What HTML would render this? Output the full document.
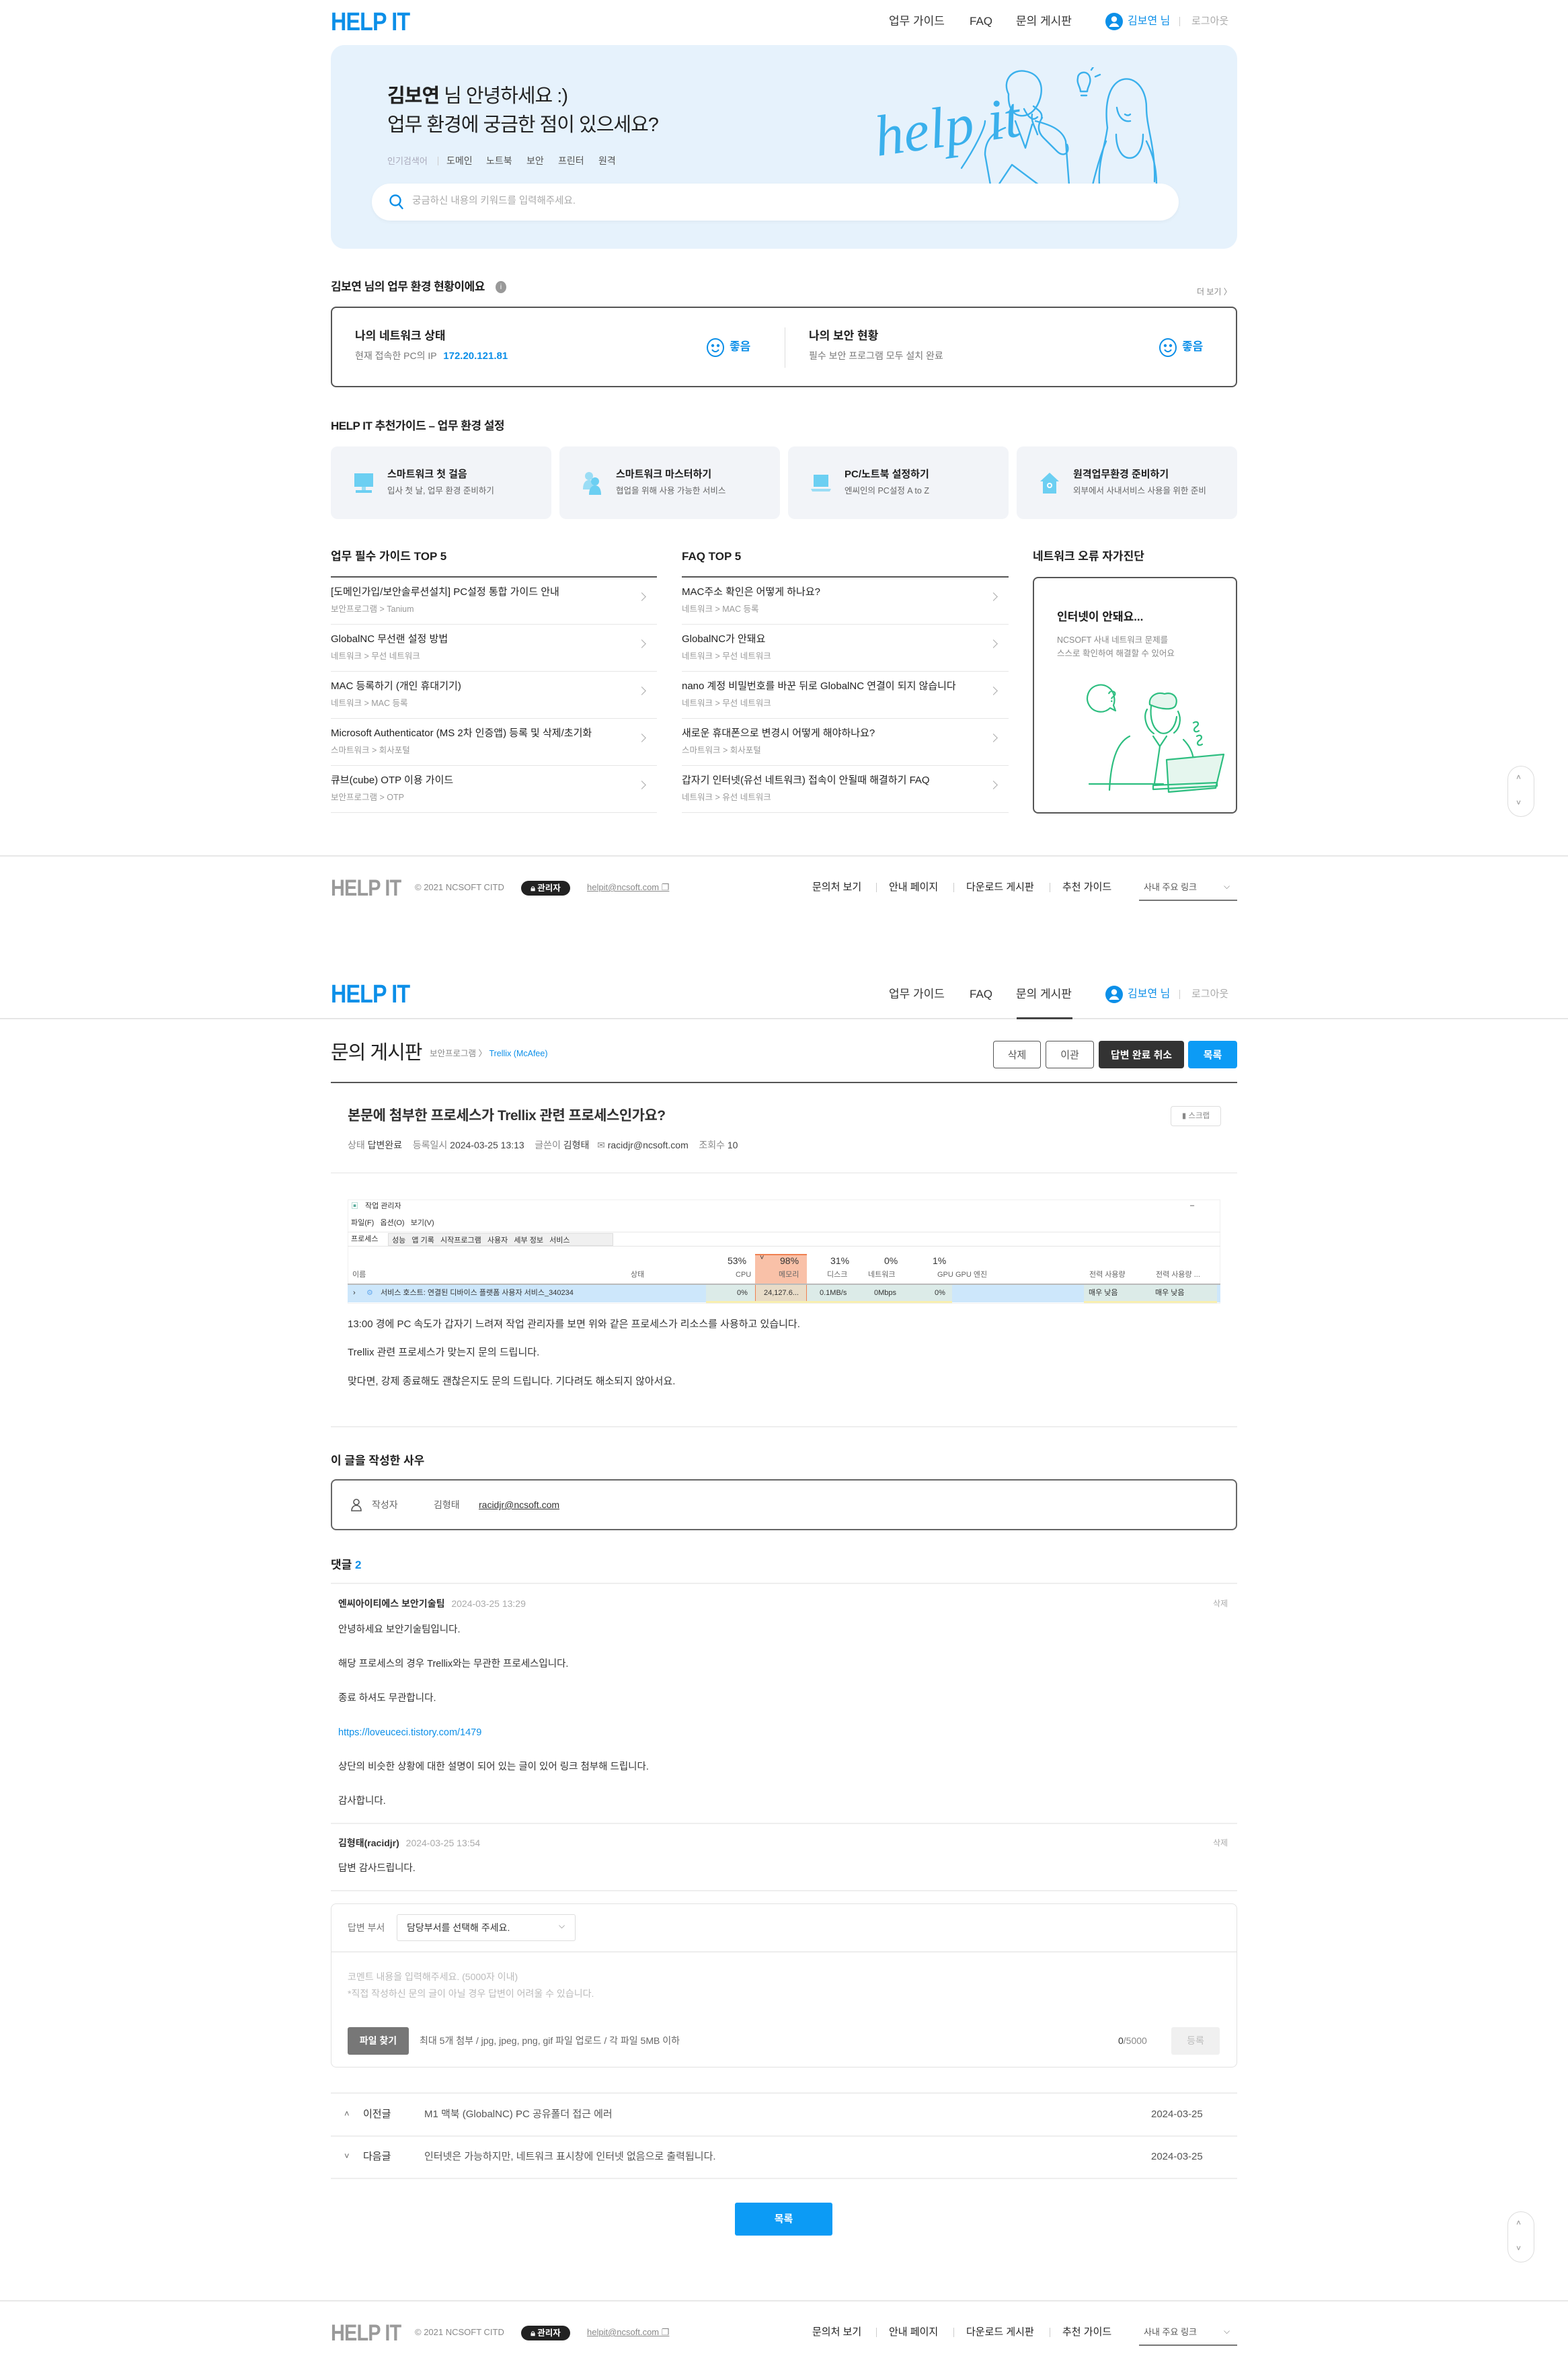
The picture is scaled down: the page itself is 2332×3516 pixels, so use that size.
<!DOCTYPE html>
<html><head><meta charset="utf-8">
<style>
*{margin:0;padding:0;box-sizing:border-box}
body{width:2332px;height:3516px;background:#fff;position:relative;overflow:hidden;font-family:"Liberation Sans","Noto Sans CJK KR",sans-serif;color:#222}
.a{position:absolute;white-space:nowrap;line-height:1}
.logo{position:absolute;font-family:"Liberation Sans Narrow","Liberation Sans",sans-serif;font-weight:700;font-size:38px;color:#0C8FE8;letter-spacing:-1px;line-height:1;transform:scaleX(.85);transform-origin:left}
.glogo{color:#9a9a9a;font-size:34px}
.nav{font-size:17px;color:#333}
.hl{position:absolute;height:1px;background:#e4e4e4}
.g{color:#888}
.box{position:absolute;border:2px solid #555;border-radius:8px}
.card{position:absolute;top:664px;width:328px;height:108px;background:#F2F4F8;border-radius:10px}
.card .t1{position:absolute;left:84px;top:34px;font-size:15px;font-weight:700;line-height:1}
.card .t2{position:absolute;left:84px;top:60px;font-size:12.5px;color:#666;line-height:1}
.li{position:absolute;height:70px}
.li .t1{position:absolute;left:0;top:14px;font-size:15px;color:#222;line-height:1;white-space:nowrap}
.li .t2{position:absolute;left:0;top:41px;font-size:12.5px;color:#999;line-height:1;white-space:nowrap}
.li .ch{position:absolute;right:18px;top:24px;width:9px;height:9px;border-top:1.5px solid #aaa;border-right:1.5px solid #aaa;transform:rotate(45deg)}
.li:after{content:"";position:absolute;left:0;right:0;bottom:0;height:1px;background:#e6e6e6}
.btn{position:absolute;top:1548px;height:41px;border-radius:4px;font-size:15px;display:flex;align-items:center;justify-content:center}
.tm{position:absolute;font-size:11px;line-height:1;white-space:nowrap;color:#333}
.cm{position:absolute;left:503px;font-size:14.5px;line-height:1;white-space:nowrap;color:#333}
.fl{position:absolute;font-size:15px;top:1312px;color:#222;line-height:1}
.sep{position:absolute;width:1px;height:14px;background:#ccc}
</style></head><body>

<!-- ===== HEADER 1 ===== -->
<div class="logo" style="left:492px;top:14px">HELP IT</div>
<div class="a nav" style="left:1322px;top:23px">업무 가이드</div>
<div class="a nav" style="left:1442px;top:23px">FAQ</div>
<div class="a nav" style="left:1511px;top:23px">문의 게시판</div>
<svg class="a" style="left:1643px;top:18px" width="28" height="28" viewBox="0 0 28 28"><circle cx="14" cy="14" r="13" fill="#0C8FE8"/><circle cx="14" cy="10.5" r="4.2" fill="#fff"/><path d="M6.5 22c1.5-4 4.3-5.5 7.5-5.5s6 1.5 7.5 5.5" fill="#fff"/></svg>
<div class="a" style="left:1677px;top:24px;font-size:16px;color:#0C8FE8">김보연 님</div>
<div class="sep" style="left:1754px;top:25px"></div>
<div class="a" style="left:1772px;top:24px;font-size:15px;color:#aaa">로그아웃</div>

<!-- HERO -->
<div class="a" style="left:492px;top:67px;width:1348px;height:303px;background:#E6F2FC;border-radius:20px"></div>
<div class="a" style="left:576px;top:129px;font-size:29px;color:#222;letter-spacing:-1px"><b>김보연</b> 님 안녕하세요 :)</div>
<div class="a" style="left:576px;top:172px;font-size:29px;color:#222;letter-spacing:-1px">업무 환경에 궁금한 점이 있으세요?</div>
<div class="a" style="left:576px;top:233px;font-size:13px;color:#aab">인기검색어</div>
<div class="sep" style="left:651px;top:233px;height:13px"></div>
<div class="a" style="left:664px;top:232px;font-size:14px;color:#555">도메인</div>
<div class="a" style="left:723px;top:232px;font-size:14px;color:#555">노트북</div>
<div class="a" style="left:783px;top:232px;font-size:14px;color:#555">보안</div>
<div class="a" style="left:830px;top:232px;font-size:14px;color:#555">프린터</div>
<div class="a" style="left:890px;top:232px;font-size:14px;color:#555">원격</div>
<svg class="a" style="left:1305px;top:100px" width="430" height="180" viewBox="0 0 430 180" fill="none" stroke="#3AB0EC" stroke-width="2.4" stroke-linecap="round" stroke-linejoin="round">
<text x="0" y="132" font-family="Liberation Serif" font-style="italic" font-size="86" fill="#3AB0EC" stroke="none" transform="rotate(-8 0 132)">help it</text>
<path d="M125 150c20-30 35-60 35-70"/>
<path d="M195 40c-10-20 5-38 25-34 18 3 28 18 22 40-4 14-14 28-30 26-12-2-18-14-17-32"/>
<path d="M218 62c5 10 12 20 20 12"/><path d="M232 58c8 6 14 10 12 18"/>
<path d="M190 90c-20 8-30 20-30 40l8 45"/><path d="M235 80c20 5 40 12 45 30l5 65"/>
<path d="M205 80l15 40 10-35"/><path d="M238 100c-4-12-10-20-8-30"/>
<path d="M245 75c-8 12-6 22 2 30l20 20c10 10 20 2 15-10"/>
<path d="M180 175l20-30 40 30"/>
<path d="M298 16c0-10 16-12 18 0 2 8-4 14-4 20h-10c0-6-6-12-4-20z"/><path d="M303 42h8"/><path d="M318 4l4-6"/><path d="M324 14l7-3"/>
<path d="M360 20c-18 10-22 40-18 70-4 30-14 50-12 85"/><path d="M360 20c20-10 40 10 40 40 0 30 14 60 12 110"/>
<path d="M356 60c2 14 10 22 20 20"/><path d="M368 70c3 2 6 2 8 0"/>
<path d="M355 100c0 20 8 35 20 35s20-14 20-35"/>
<path d="M340 110c-8 20-14 40-20 65"/><path d="M400 110c10 20 15 40 15 65"/>
</svg>
<div class="a" style="left:553px;top:273px;width:1200px;height:55px;background:#fff;border-radius:28px;box-shadow:0 2px 6px rgba(0,0,0,.04)"></div>
<svg class="a" style="left:578px;top:288px" width="24" height="26" viewBox="0 0 24 26" fill="none" stroke="#0C8FE8" stroke-width="2.4"><circle cx="10" cy="10" r="7.5"/><path d="M15.5 16l5 6" stroke-linecap="round"/></svg>
<div class="a" style="left:613px;top:292px;font-size:14.5px;color:#aaa">궁금하신 내용의 키워드를 입력해주세요.</div>

<!-- STATUS -->
<div class="a" style="left:492px;top:418px;font-size:17px;font-weight:700;letter-spacing:-.5px">김보연 님의 업무 환경 현황이에요</div>
<div class="a" style="left:737px;top:418px;width:16px;height:18px;border-radius:50%;background:#999;color:#fff;font-size:11px;text-align:center;line-height:18px">i</div>
<div class="a" style="left:1780px;top:428px;font-size:12px;color:#888">더 보기 〉</div>
<div class="box" style="left:492px;top:456px;width:1348px;height:120px"></div>
<div class="a" style="left:528px;top:491px;font-size:17px;font-weight:700">나의 네트워크 상태</div>
<div class="a" style="left:528px;top:522px;font-size:14px;color:#777">현재 접속한 PC의 IP <b style="color:#0C8FE8;font-size:15px;margin-left:6px">172.20.121.81</b></div>
<svg class="a" style="left:1050px;top:502px" width="28" height="30" viewBox="0 0 28 30" fill="none" stroke="#0C8FE8" stroke-width="2"><ellipse cx="14" cy="15" rx="12" ry="13"/><circle cx="10" cy="12" r="1.2" fill="#0C8FE8"/><circle cx="18" cy="12" r="1.2" fill="#0C8FE8"/><path d="M9 18c3 4 7 4 10 0"/></svg>
<div class="a" style="left:1085px;top:507px;font-size:17px;color:#0C8FE8;font-weight:700">좋음</div>
<div class="a" style="left:1167px;top:487px;width:1px;height:60px;background:#ddd"></div>
<div class="a" style="left:1203px;top:491px;font-size:17px;font-weight:700">나의 보안 현황</div>
<div class="a" style="left:1203px;top:522px;font-size:14px;color:#777">필수 보안 프로그램 모두 설치 완료</div>
<svg class="a" style="left:1723px;top:502px" width="28" height="30" viewBox="0 0 28 30" fill="none" stroke="#0C8FE8" stroke-width="2"><ellipse cx="14" cy="15" rx="12" ry="13"/><circle cx="10" cy="12" r="1.2" fill="#0C8FE8"/><circle cx="18" cy="12" r="1.2" fill="#0C8FE8"/><path d="M9 18c3 4 7 4 10 0"/></svg>
<div class="a" style="left:1758px;top:507px;font-size:17px;color:#0C8FE8;font-weight:700">좋음</div>

<!-- GUIDE CARDS -->
<div class="a" style="left:492px;top:625px;font-size:17px;font-weight:700;letter-spacing:-.5px">HELP IT 추천가이드 – 업무 환경 설정</div>
<div class="card" style="left:492px"><svg style="position:absolute;left:32px;top:38px" width="34" height="34" viewBox="0 0 34 34"><rect x="3" y="2" width="28" height="20" fill="#6CCFF2"/><rect x="14" y="22" width="6" height="5" fill="#9BDDF5"/><rect x="5" y="27" width="24" height="4" fill="#6CCFF2"/></svg><div class="t1">스마트워크 첫 걸음</div><div class="t2">입사 첫 날, 업무 환경 준비하기</div></div>
<div class="card" style="left:832px"><svg style="position:absolute;left:32px;top:36px" width="34" height="38" viewBox="0 0 34 38"><circle cx="12" cy="8" r="6" fill="#9BDDF5"/><path d="M3 28c0-10 4-14 9-14s9 4 9 14z" fill="#9BDDF5"/><circle cx="21" cy="16" r="6" fill="#6CCFF2"/><path d="M12 36c0-10 4-14 9-14s9 4 9 14z" fill="#6CCFF2"/></svg><div class="t1">스마트워크 마스터하기</div><div class="t2">협업을 위해 사용 가능한 서비스</div></div>
<div class="card" style="left:1172px"><svg style="position:absolute;left:32px;top:38px" width="34" height="34" viewBox="0 0 34 34"><rect x="6" y="4" width="22" height="18" fill="#6CCFF2"/><path d="M2 25h30l-2 4H4z" fill="#9BDDF5"/></svg><div class="t1">PC/노트북 설정하기</div><div class="t2">엔씨인의 PC설정 A to Z</div></div>
<div class="card" style="left:1512px"><svg style="position:absolute;left:32px;top:36px" width="34" height="38" viewBox="0 0 34 38"><path d="M17 3L3 16h4v18h20V16h4z" fill="#6CCFF2"/><circle cx="17" cy="22" r="4" fill="#fff"/><circle cx="17" cy="22" r="2" fill="#6CCFF2"/></svg><div class="t1">원격업무환경 준비하기</div><div class="t2">외부에서 사내서비스 사용을 위한 준비</div></div>

<!-- TOP5 -->
<div class="a" style="left:492px;top:819px;font-size:17px;font-weight:700">업무 필수 가이드 TOP 5</div>
<div class="a" style="left:1014px;top:819px;font-size:17px;font-weight:700">FAQ TOP 5</div>
<div class="a" style="left:1536px;top:819px;font-size:17px;font-weight:700">네트워크 오류 자가진단</div>
<div class="a" style="left:492px;top:857px;width:485px;height:2px;background:#555"></div>
<div class="a" style="left:1014px;top:857px;width:486px;height:2px;background:#555"></div>
<div class="li" style="left:492px;top:859px;width:485px"><div class="t1">[도메인가입/보안솔루션설치] PC설정 통합 가이드 안내</div><div class="t2">보안프로그램 &gt; Tanium</div><div class="ch"></div></div>
<div class="li" style="left:492px;top:929px;width:485px"><div class="t1">GlobalNC 무선랜 설정 방법</div><div class="t2">네트워크 &gt; 무선 네트워크</div><div class="ch"></div></div>
<div class="li" style="left:492px;top:999px;width:485px"><div class="t1">MAC 등록하기 (개인 휴대기기)</div><div class="t2">네트워크 &gt; MAC 등록</div><div class="ch"></div></div>
<div class="li" style="left:492px;top:1069px;width:485px"><div class="t1">Microsoft Authenticator (MS 2차 인증앱) 등록 및 삭제/초기화</div><div class="t2">스마트워크 &gt; 회사포털</div><div class="ch"></div></div>
<div class="li" style="left:492px;top:1139px;width:485px"><div class="t1">큐브(cube) OTP 이용 가이드</div><div class="t2">보안프로그램 &gt; OTP</div><div class="ch"></div></div>
<div class="li" style="left:1014px;top:859px;width:486px"><div class="t1">MAC주소 확인은 어떻게 하나요?</div><div class="t2">네트워크 &gt; MAC 등록</div><div class="ch"></div></div>
<div class="li" style="left:1014px;top:929px;width:486px"><div class="t1">GlobalNC가 안돼요</div><div class="t2">네트워크 &gt; 무선 네트워크</div><div class="ch"></div></div>
<div class="li" style="left:1014px;top:999px;width:486px"><div class="t1">nano 계정 비밀번호를 바꾼 뒤로 GlobalNC 연결이 되지 않습니다</div><div class="t2">네트워크 &gt; 무선 네트워크</div><div class="ch"></div></div>
<div class="li" style="left:1014px;top:1069px;width:486px"><div class="t1">새로운 휴대폰으로 변경시 어떻게 해야하나요?</div><div class="t2">스마트워크 &gt; 회사포털</div><div class="ch"></div></div>
<div class="li" style="left:1014px;top:1139px;width:486px"><div class="t1">갑자기 인터넷(유선 네트워크) 접속이 안될때 해결하기 FAQ</div><div class="t2">네트워크 &gt; 유선 네트워크</div><div class="ch"></div></div>
<div class="box" style="left:1536px;top:858px;width:304px;height:352px"></div>
<div class="a" style="left:1572px;top:909px;font-size:17px;font-weight:700">인터넷이 안돼요...</div>
<div class="a" style="left:1572px;top:946px;font-size:12.5px;color:#888">NCSOFT 사내 네트워크 문제를</div>
<div class="a" style="left:1572px;top:966px;font-size:12.5px;color:#888">스스로 확인하여 해결할 수 있어요</div>
<svg class="a" style="left:1610px;top:1000px" width="225" height="185" viewBox="0 0 225 185" fill="none" stroke="#2DBE80" stroke-width="2.2" stroke-linecap="round" stroke-linejoin="round">
<path d="M47 37a20 20 0 1 0-6 16l8 4-3-8a20 20 0 0 0 1-12"/><text x="37" y="44" font-size="24" fill="#2DBE80" stroke="none" font-family="Liberation Sans">?</text>
<path d="M100 48c-2-12 10-20 22-16 12-4 22 6 16 18-4 6-20 6-38-2z" fill="#E5F6EE"/>
<path d="M102 50c-2 18 2 34 14 40 12 4 22-8 24-24"/>
<path d="M96 55c-6 10-2 28 10 36"/><path d="M142 58c6 12 2 26-6 32"/>
<path d="M70 95c-20 10-28 40-30 80"/><path d="M105 95l10 15 10-15"/><path d="M115 110l-8 55"/>
<path d="M150 100c10 10 14 20 15 30"/>
<path d="M10 166h110"/>
<path d="M165 75c6-4 10 2 4 6-6 4-2 10 4 6"/><path d="M170 95c6-4 10 2 4 6-6 4-2 10 4 6"/>
<path d="M125 130l85-8-12 50-70 6z" fill="#E5F6EE"/><path d="M105 168l95-4v5l-95 5z"/>
</svg>

<!-- FOOTER 1 -->
<div class="hl" style="left:0;top:1272px;width:2332px;height:2px;background:#e8e8e8"></div>
<div class="logo glogo" style="left:492px;top:1304px">HELP IT</div>
<div class="a" style="left:617px;top:1313px;font-size:13px;color:#888">© 2021 NCSOFT CITD</div>
<div class="a" style="left:775px;top:1310px;width:73px;height:22px;border-radius:11px;background:#222;color:#fff;font-size:12.5px;font-weight:700;text-align:center;line-height:22px">🔒︎ 관리자</div>
<div class="a" style="left:873px;top:1313px;font-size:13px;color:#888;text-decoration:underline">helpit@ncsoft.com ❐</div>
<div class="fl" style="left:1208px">문의처 보기</div><div class="sep" style="left:1303px;top:1313px"></div>
<div class="fl" style="left:1322px">안내 페이지</div><div class="sep" style="left:1418px;top:1313px"></div>
<div class="fl" style="left:1437px">다운로드 게시판</div><div class="sep" style="left:1561px;top:1313px"></div>
<div class="fl" style="left:1580px">추천 가이드</div>
<div class="a" style="left:1701px;top:1313px;font-size:13px;color:#555">사내 주요 링크</div>
<div class="a" style="left:1820px;top:1312px;font-size:12px;color:#777">⌵</div>
<div class="a" style="left:1694px;top:1338px;width:146px;height:2px;background:#777"></div>

<!-- ===== HEADER 2 ===== -->
<div class="logo" style="left:492px;top:1460px">HELP IT</div>
<div class="a nav" style="left:1322px;top:1470px">업무 가이드</div>
<div class="a nav" style="left:1442px;top:1470px">FAQ</div>
<div class="a nav" style="left:1511px;top:1470px">문의 게시판</div>
<svg class="a" style="left:1643px;top:1465px" width="28" height="28" viewBox="0 0 28 28"><circle cx="14" cy="14" r="13" fill="#0C8FE8"/><circle cx="14" cy="10.5" r="4.2" fill="#fff"/><path d="M6.5 22c1.5-4 4.3-5.5 7.5-5.5s6 1.5 7.5 5.5" fill="#fff"/></svg>
<div class="a" style="left:1677px;top:1471px;font-size:16px;color:#0C8FE8">김보연 님</div>
<div class="sep" style="left:1754px;top:1472px"></div>
<div class="a" style="left:1772px;top:1471px;font-size:15px;color:#aaa">로그아웃</div>
<div class="hl" style="left:0;top:1514px;width:2332px;height:2px;background:#e6e6e6"></div>
<div class="a" style="left:1512px;top:1513px;width:83px;height:3px;background:#444"></div>

<div class="a" style="left:492px;top:1552px;font-size:29px;letter-spacing:-1px">문의 게시판</div>
<div class="a" style="left:639px;top:1561px;font-size:12.5px;color:#888">보안프로그램 〉 <span style="color:#0C8FE8">Trellix (McAfee)</span></div>
<div class="btn" style="left:1477px;width:71px;border:1.5px solid #555;color:#555">삭제</div>
<div class="btn" style="left:1555px;width:72px;border:1.5px solid #555;color:#555">이관</div>
<div class="btn" style="left:1634px;width:127px;background:#333;color:#fff;font-weight:700">답변 완료 취소</div>
<div class="btn" style="left:1767px;width:73px;background:#0C9BF5;color:#fff;font-weight:700">목록</div>
<div class="a" style="left:492px;top:1609px;width:1348px;height:2px;background:#555"></div>

<div class="a" style="left:517px;top:1649px;font-size:21px;font-weight:700;letter-spacing:-.5px;color:#333">본문에 첨부한 프로세스가 Trellix 관련 프로세스인가요?</div>
<div class="a" style="left:1741px;top:1645px;width:75px;height:30px;border:1px solid #ddd;border-radius:4px;font-size:11.5px;color:#888;text-align:center;line-height:28px">▮ 스크랩</div>
<div class="a" style="left:517px;top:1696px;font-size:14px;color:#888">상태 <span style="color:#444">답변완료</span>&nbsp;&nbsp;&nbsp;&nbsp;등록일시 <span style="color:#444">2024-03-25 13:13</span>&nbsp;&nbsp;&nbsp;&nbsp;글쓴이 <span style="color:#444">김형태</span>&nbsp;&nbsp;&nbsp;✉ <span style="color:#444">racidjr@ncsoft.com</span>&nbsp;&nbsp;&nbsp;&nbsp;조회수 <span style="color:#444">10</span></div>
<div class="hl" style="left:492px;top:1744px;width:1348px"></div>

<!-- TASK MANAGER -->
<div class="a" style="left:517px;top:1784px;width:1298px;height:155px;background:#fff;border:1px solid #f0f0f0"></div>
<div class="tm" style="left:522px;top:1789px;color:#5a9">▣</div><div class="tm" style="left:543px;top:1789px">작업 관리자</div>
<div class="tm" style="left:1770px;top:1788px">–</div>
<div class="tm" style="left:522px;top:1814px">파일(F)&nbsp;&nbsp;&nbsp;옵션(O)&nbsp;&nbsp;&nbsp;보기(V)</div>
<div class="a" style="left:517px;top:1832px;width:1298px;height:1px;background:#e8e8e8"></div>
<div class="a" style="left:577px;top:1834px;width:335px;height:19px;background:#f0f0f0;border:1px solid #ddd"></div>
<div class="tm" style="left:522px;top:1838px">프로세스</div>
<div class="tm" style="left:583px;top:1840px">성능&nbsp;&nbsp;&nbsp;앱 기록&nbsp;&nbsp;&nbsp;시작프로그램&nbsp;&nbsp;&nbsp;사용자&nbsp;&nbsp;&nbsp;세부 정보&nbsp;&nbsp;&nbsp;서비스</div>
<div class="a" style="left:517px;top:1853px;width:1298px;height:1px;background:#e5e5e5"></div>
<div class="a" style="left:1123px;top:1865px;width:77px;height:44px;background:#F9C1A8;border-top:2px solid #F08050"></div>
<div class="tm" style="left:1082px;top:1868px;font-size:14px">53%</div>
<div class="tm" style="left:1160px;top:1868px;font-size:14px">98%</div><div class="tm" style="left:1130px;top:1866px">˅</div>
<div class="tm" style="left:1235px;top:1868px;font-size:14px">31%</div>
<div class="tm" style="left:1315px;top:1868px;font-size:14px">0%</div>
<div class="tm" style="left:1387px;top:1868px;font-size:14px">1%</div>
<div class="tm" style="left:524px;top:1891px;color:#666">이름</div>
<div class="tm" style="left:938px;top:1891px;color:#666">상태</div>
<div class="tm" style="left:1094px;top:1891px;color:#666">CPU</div>
<div class="tm" style="left:1158px;top:1891px;color:#666">메모리</div>
<div class="tm" style="left:1230px;top:1891px;color:#666">디스크</div>
<div class="tm" style="left:1291px;top:1891px;color:#666">네트워크</div>
<div class="tm" style="left:1394px;top:1891px;color:#666">GPU</div>
<div class="tm" style="left:1421px;top:1891px;color:#666">GPU 엔진</div>
<div class="tm" style="left:1620px;top:1891px;color:#666">전력 사용량</div>
<div class="tm" style="left:1719px;top:1891px;color:#666">전력 사용량 ...</div>
<div class="a" style="left:517px;top:1909px;width:1298px;height:2px;background:#bbb"></div>
<div class="a" style="left:517px;top:1911px;width:1298px;height:26px;background:#CDE7FB"></div>
<div class="a" style="left:1050px;top:1911px;width:366px;height:26px;background:#DCEBE8"></div>
<div class="a" style="left:1123px;top:1911px;width:77px;height:26px;background:#E8DCC8;border-left:1px solid #F08050;border-right:1px solid #F08050"></div>
<div class="a" style="left:1612px;top:1911px;width:198px;height:26px;background:#DCEBE8"></div>
<div class="a" style="left:1050px;top:1935px;width:366px;height:3px;background:#F8EFB0"></div>
<div class="a" style="left:1612px;top:1935px;width:198px;height:3px;background:#F8EFB0"></div>
<div class="tm" style="left:525px;top:1918px">›</div>
<div class="tm" style="left:545px;top:1918px;color:#6ae">⚙</div>
<div class="tm" style="left:566px;top:1918px">서비스 호스트: 연결된 디바이스 플랫폼 사용자 서비스_340234</div>
<div class="tm" style="left:1096px;top:1918px">0%</div>
<div class="tm" style="left:1136px;top:1918px">24,127.6...</div>
<div class="tm" style="left:1219px;top:1918px">0.1MB/s</div>
<div class="tm" style="left:1300px;top:1918px">0Mbps</div>
<div class="tm" style="left:1390px;top:1918px">0%</div>
<div class="tm" style="left:1619px;top:1918px">매우 낮음</div>
<div class="tm" style="left:1718px;top:1918px">매우 낮음</div>

<div class="a" style="left:517px;top:1962px;font-size:15px;color:#333">13:00 경에 PC 속도가 갑자기 느려져 작업 관리자를 보면 위와 같은 프로세스가 리소스를 사용하고 있습니다.</div>
<div class="a" style="left:517px;top:2004px;font-size:15px;color:#333">Trellix 관련 프로세스가 맞는지 문의 드립니다.</div>
<div class="a" style="left:517px;top:2047px;font-size:15px;color:#333">맞다면, 강제 종료해도 괜찮은지도 문의 드립니다. 기다려도 해소되지 않아서요.</div>
<div class="hl" style="left:492px;top:2121px;width:1348px;height:2px;background:#eee"></div>

<!-- AUTHOR -->
<div class="a" style="left:492px;top:2164px;font-size:17px;font-weight:700">이 글을 작성한 사우</div>
<div class="box" style="left:492px;top:2200px;width:1348px;height:76px;border-color:#666"></div>
<svg class="a" style="left:521px;top:2228px" width="18" height="20" viewBox="0 0 18 20" fill="none" stroke="#555" stroke-width="1.6"><circle cx="9" cy="6" r="4"/><path d="M2 19c0-5 3-8 7-8s7 3 7 8z"/></svg>
<div class="a" style="left:553px;top:2231px;font-size:14px;color:#666">작성자</div>
<div class="a" style="left:645px;top:2231px;font-size:14px;color:#666">김형태</div>
<div class="a" style="left:712px;top:2231px;font-size:14px;color:#333;text-decoration:underline">racidjr@ncsoft.com</div>

<!-- COMMENTS -->
<div class="a" style="left:492px;top:2319px;font-size:17px;font-weight:700">댓글 <span style="color:#0C8FE8">2</span></div>
<div class="hl" style="left:492px;top:2354px;width:1348px;height:2px;background:#eee"></div>
<div class="cm" style="top:2378px;font-weight:700;font-size:14px">엔씨아이티에스 보안기술팀 <span style="color:#aaa;font-weight:400;margin-left:6px">2024-03-25 13:29</span></div>
<div class="a" style="left:1804px;top:2379px;font-size:12px;color:#aaa">삭제</div>
<div class="cm" style="top:2417px">안녕하세요 보안기술팀입니다.</div>
<div class="cm" style="top:2468px">해당 프로세스의 경우 Trellix와는 무관한 프로세스입니다.</div>
<div class="cm" style="top:2519px">종료 하셔도 무관합니다.</div>
<div class="cm" style="top:2570px;color:#0C8FE8">https://loveuceci.tistory.com/1479</div>
<div class="cm" style="top:2621px">상단의 비슷한 상황에 대한 설명이 되어 있는 글이 있어 링크 첨부해 드립니다.</div>
<div class="cm" style="top:2672px">감사합니다.</div>
<div class="hl" style="left:492px;top:2711px;width:1348px;height:2px;background:#eee"></div>
<div class="cm" style="top:2734px;font-weight:700;font-size:14px">김형태(racidjr) <span style="color:#aaa;font-weight:400;margin-left:6px">2024-03-25 13:54</span></div>
<div class="a" style="left:1804px;top:2735px;font-size:12px;color:#aaa">삭제</div>
<div class="cm" style="top:2772px">답변 감사드립니다.</div>
<div class="hl" style="left:492px;top:2811px;width:1348px;height:2px;background:#eee"></div>

<!-- FORM -->
<div class="a" style="left:492px;top:2831px;width:1348px;height:244px;border:1.5px solid #e2e2e2;border-radius:8px"></div>
<div class="a" style="left:517px;top:2860px;font-size:14px;color:#777">답변 부서</div>
<div class="a" style="left:590px;top:2847px;width:266px;height:40px;border:1px solid #ddd;border-radius:3px"></div>
<div class="a" style="left:605px;top:2860px;font-size:14px;color:#333">담당부서를 선택해 주세요.</div>
<div class="a" style="left:831px;top:2858px;font-size:12px;color:#777">⌵</div>
<div class="hl" style="left:493px;top:2902px;width:1346px;height:2px;background:#eee"></div>
<div class="a" style="left:517px;top:2933px;font-size:14px;color:#bbb">코멘트 내용을 입력해주세요. (5000자 이내)</div>
<div class="a" style="left:517px;top:2958px;font-size:14px;color:#bbb">*직접 작성하신 문의 글이 아닐 경우 답변이 어려울 수 있습니다.</div>
<div class="a" style="left:517px;top:3015px;width:91px;height:41px;background:#777;border-radius:3px;color:#fff;font-size:14px;font-weight:700;text-align:center;line-height:41px">파일 찾기</div>
<div class="a" style="left:624px;top:3028px;font-size:14px;color:#666">최대 5개 첨부 / jpg, jpeg, png, gif 파일 업로드 / 각 파일 5MB 이하</div>
<div class="a" style="left:1663px;top:3028px;font-size:14px;color:#888"><b style="color:#333;font-weight:400">0</b>/5000</div>
<div class="a" style="left:1742px;top:3015px;width:72px;height:41px;background:#f0f0f0;border-radius:3px;color:#bbb;font-size:14px;text-align:center;line-height:41px">등록</div>

<!-- PREV/NEXT -->
<div class="hl" style="left:492px;top:3112px;width:1348px;height:2px;background:#eee"></div>
<div class="a" style="left:512px;top:3137px;font-size:13px;color:#666">˄</div>
<div class="a" style="left:540px;top:3137px;font-size:15px;color:#333">이전글</div>
<div class="a" style="left:631px;top:3137px;font-size:15px;color:#555">M1 맥북 (GlobalNC) PC 공유폴더 접근 에러</div>
<div class="a" style="left:1712px;top:3137px;font-size:15px;color:#555">2024-03-25</div>
<div class="hl" style="left:492px;top:3176px;width:1348px;height:2px;background:#eee"></div>
<div class="a" style="left:512px;top:3200px;font-size:13px;color:#666">˅</div>
<div class="a" style="left:540px;top:3200px;font-size:15px;color:#333">다음글</div>
<div class="a" style="left:631px;top:3200px;font-size:15px;color:#555">인터넷은 가능하지만, 네트워크 표시창에 인터넷 없음으로 출력됩니다.</div>
<div class="a" style="left:1712px;top:3200px;font-size:15px;color:#555">2024-03-25</div>
<div class="hl" style="left:492px;top:3239px;width:1348px;height:2px;background:#eee"></div>
<div class="a" style="left:1093px;top:3276px;width:145px;height:49px;background:#0C9BF5;border-radius:3px;color:#fff;font-size:15px;font-weight:700;text-align:center;line-height:49px">목록</div>

<!-- scroll widgets -->
<div class="a" style="left:2242px;top:1139px;width:40px;height:76px;border:1.5px solid #ddd;border-radius:20px;background:#fff"></div>
<div class="a" style="left:2255px;top:1150px;font-size:12px;color:#888">˄</div>
<div class="a" style="left:2255px;top:1188px;font-size:12px;color:#888">˅</div>
<div class="a" style="left:2242px;top:3289px;width:40px;height:76px;border:1.5px solid #ddd;border-radius:20px;background:#fff"></div>
<div class="a" style="left:2255px;top:3300px;font-size:12px;color:#888">˄</div>
<div class="a" style="left:2255px;top:3338px;font-size:12px;color:#888">˅</div>

<!-- FOOTER 2 -->
<div class="hl" style="left:0;top:3421px;width:2332px;height:2px;background:#e8e8e8"></div>
<div class="logo glogo" style="left:492px;top:3453px">HELP IT</div>
<div class="a" style="left:617px;top:3462px;font-size:13px;color:#888">© 2021 NCSOFT CITD</div>
<div class="a" style="left:775px;top:3459px;width:73px;height:22px;border-radius:11px;background:#222;color:#fff;font-size:12.5px;font-weight:700;text-align:center;line-height:22px">🔒︎ 관리자</div>
<div class="a" style="left:873px;top:3462px;font-size:13px;color:#888;text-decoration:underline">helpit@ncsoft.com ❐</div>
<div class="fl" style="left:1208px;top:3461px">문의처 보기</div><div class="sep" style="left:1303px;top:3462px"></div>
<div class="fl" style="left:1322px;top:3461px">안내 페이지</div><div class="sep" style="left:1418px;top:3462px"></div>
<div class="fl" style="left:1437px;top:3461px">다운로드 게시판</div><div class="sep" style="left:1561px;top:3462px"></div>
<div class="fl" style="left:1580px;top:3461px">추천 가이드</div>
<div class="a" style="left:1701px;top:3462px;font-size:13px;color:#555">사내 주요 링크</div>
<div class="a" style="left:1820px;top:3461px;font-size:12px;color:#777">⌵</div>
<div class="a" style="left:1694px;top:3487px;width:146px;height:2px;background:#777"></div>
</body></html>
